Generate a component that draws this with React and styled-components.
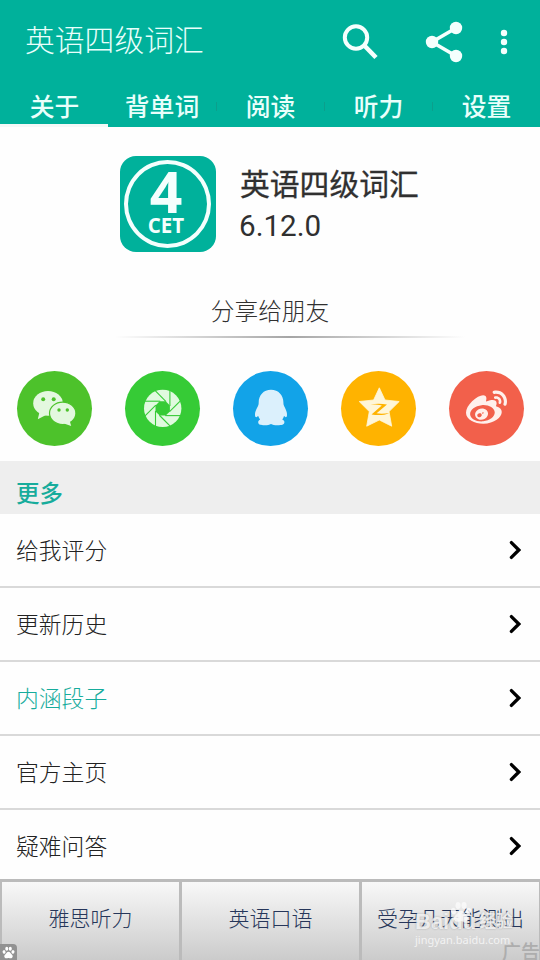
import React from 'react';
import styled, { createGlobalStyle } from 'styled-components';
import { FaWeibo } from 'react-icons/fa';

const TABS = ['关于', '背单词', '阅读', '听力', '设置'];

const ROWS = [
  { label: '给我评分' },
  { label: '更新历史' },
  { label: '内涵段子', active: true },
  { label: '官方主页' },
  { label: '疑难问答' },
];

const ADS = ['雅思听力', '英语口语', '受孕几天能测出'];

function SearchIcon() {
  return (
    <svg width="38" height="38" viewBox="0 0 38 38" fill="none" stroke="#f4fffd">
      <circle cx="14" cy="14.5" r="11.2" strokeWidth="4" />
      <path d="M21.8 22 L34 34.5" strokeWidth="4.6" />
    </svg>
  );
}

function ShareIcon() {
  return (
    <svg width="38" height="42" viewBox="0 0 38 42" fill="#f4fffd">
      <path d="M31 7 L7 21 L31 35" fill="none" stroke="#f4fffd" strokeWidth="3.6" />
      <circle cx="31" cy="7" r="6.2" />
      <circle cx="7" cy="21" r="6.2" />
      <circle cx="31" cy="35" r="6.2" />
    </svg>
  );
}

function MoreIcon() {
  return (
    <svg width="8" height="26" viewBox="0 0 8 26" fill="#f4fffd">
      <circle cx="4" cy="4" r="3.2" />
      <circle cx="4" cy="13" r="3.2" />
      <circle cx="4" cy="22" r="3.2" />
    </svg>
  );
}

function WechatIcon() {
  return (
    <svg width="75" height="75" viewBox="0 0 75 75" fill="#e3f8df">
      <ellipse cx="31" cy="32.3" rx="14.8" ry="12.4" />
      <path d="M22.5 41 L20.8 48.2 L29.5 43.8 Z" />
      <ellipse cx="45.7" cy="42.3" rx="13.2" ry="11.2" stroke="#4dc22b" strokeWidth="1.2" />
      <path d="M47 52.5 L54.2 55 L52.6 49.5 Z" />
      <g fill="#4dc22b">
        <circle cx="26.2" cy="28.3" r="2" />
        <circle cx="36.7" cy="28.3" r="2" />
        <circle cx="42" cy="39" r="1.7" />
        <circle cx="50.3" cy="39" r="1.7" />
      </g>
    </svg>
  );
}

function MomentsIcon() {
  return (
    <svg width="75" height="75" viewBox="-37.7 -37.4 75 75">
      <circle r="18.7" fill="#e0fadf" />
      <path d="M7.2 -3 V3 L3 7.2 H-3 L-7.2 3 V-3 L-3 -7.2 H3 Z" fill="#36cb36" />
      {[0, 45, 90, 135, 180, 225, 270, 315].map((angle) => (
        <path key={angle} d="M7.2 -18.5 V-2.5" stroke="#36cb36" strokeWidth="1.1" transform={`rotate(${angle})`} />
      ))}
    </svg>
  );
}

function QqIcon() {
  return (
    <svg width="75" height="75" viewBox="0 0 75 75" fill="#dbf0fc">
      <path d="M38 18.8 C45.5 18.8 50.4 24.3 50.4 31.5 C50.4 33 50.6 34 51.2 35.3 C53 39 54.2 41.5 54 44 C53.9 46 53 47 51.8 45.6 L51 45 C50.6 46.6 50 47.6 49.2 48.6 C50.8 49.4 51.4 50 51.4 51.2 C51.4 53.6 48.5 54.2 44.6 54.2 C41.5 54.2 39.5 53.8 38 52.9 C36.5 53.8 34.5 54.2 31.6 54.2 C27.7 54.2 25.2 53.6 25.2 51.2 C25.2 50 25.8 49.4 27.2 48.6 C26.4 47.6 25.8 46.6 25.2 45 L24.3 45.6 C23.1 47 22.1 46 22 44 C21.8 41.5 23 39 24.9 35.3 C25.5 34 25.7 33 25.7 31.5 C25.7 24.3 30.5 18.8 38 18.8 Z" />
    </svg>
  );
}

function QzoneIcon() {
  return (
    <svg width="75" height="75" viewBox="0 0 75 75">
      <path
        d="M38.3 16.8 L44 29 L58.2 30.5 L48 40.6 L50.7 55.2 L38.3 49 L25.7 55.2 L28.3 40.6 L18.2 30.5 L32.6 29 Z"
        fill="#fff6d8"
        stroke="#fff6d8"
        strokeWidth="0.8"
        strokeLinejoin="round"
      />
      <path d="M29.5 33.6 C35 32.4 41 32.6 46 33.6 L35.6 42.3 C39.7 42.9 43.7 42.8 48.2 41.9 C43.5 44.3 36.8 44.5 30.5 43.4 L40.8 34.5 C37 33.6 33.5 33.5 29.5 33.6 Z" fill="#ffb300" />
    </svg>
  );
}

function Chevron() {
  return (
    <svg width="12" height="20" viewBox="0 0 12 20" fill="none" stroke="#000" strokeWidth="3.3">
      <path d="M2.4 2.6 L9.8 10 L2.4 17.4" strokeLinecap="round" />
    </svg>
  );
}

function Paw({ size }) {
  return (
    <svg width={size} height={size} viewBox="0 0 24 24" fill="currentColor">
      <ellipse cx="3.8" cy="11" rx="2.7" ry="3.5" transform="rotate(-15 3.8 11)" />
      <ellipse cx="8.8" cy="5" rx="2.8" ry="3.8" />
      <ellipse cx="15.3" cy="5" rx="2.8" ry="3.8" />
      <ellipse cx="20.3" cy="11" rx="2.7" ry="3.5" transform="rotate(15 20.3 11)" />
      <path d="M12 10.5 C15 10.5 16 14 18.5 16 C21 18.5 19.5 22.5 16 22.5 C14 22.5 13.5 22 12 22 C10.5 22 10 22.5 8 22.5 C4.5 22.5 3 18.5 5.5 16 C8 14 9 10.5 12 10.5 Z" />
    </svg>
  );
}

export default function App() {
  return (
    <Screen>
      <GlobalStyle />
      <Header>
        <Toolbar>
          <Title>英语四级词汇</Title>
          <Actions>
            <SearchIcon />
            <ShareIcon />
            <MoreIcon />
          </Actions>
        </Toolbar>
        <Tabs>
          {TABS.map((tab, i) => (
            <Tab key={tab} $active={i === 0}>
              {tab}
            </Tab>
          ))}
        </Tabs>
      </Header>

      <About>
        <Logo>
          <Ring>
            <LogoNumber>4</LogoNumber>
            <LogoText>CET</LogoText>
          </Ring>
        </Logo>
        <div>
          <AppName>英语四级词汇</AppName>
          <Version>6.12.0</Version>
        </div>
      </About>

      <ShareTitle>分享给朋友</ShareTitle>
      <Divider />
      <ShareList>
        <ShareButton $color="#4dc22b"><WechatIcon /></ShareButton>
        <ShareButton $color="#36cb36"><MomentsIcon /></ShareButton>
        <ShareButton $color="#12a3e8"><QqIcon /></ShareButton>
        <ShareButton $color="#ffb300"><QzoneIcon /></ShareButton>
        <ShareButton $color="#f2604b"><FaWeibo size={41} color="#fff0ec" /></ShareButton>
      </ShareList>

      <SectionTitle>更多</SectionTitle>
      <List>
        {ROWS.map((row) => (
          <Row key={row.label} $active={row.active}>
            <RowLabel>{row.label}</RowLabel>
            <Chevron />
          </Row>
        ))}
      </List>

      <AdBar>
        {ADS.map((ad) => (
          <Ad key={ad}>{ad}</Ad>
        ))}
        <PawBadge><Paw size={13} /></PawBadge>
        <AdMark>广告</AdMark>
        <Watermark>
          <WatermarkPaw><Paw size={22} /></WatermarkPaw>
          <WatermarkName>
            <b>Baidu</b>
            <span>经验</span>
          </WatermarkName>
          <WatermarkUrl>jingyan.baidu.com</WatermarkUrl>
        </Watermark>
      </AdBar>
    </Screen>
  );
}

const GlobalStyle = createGlobalStyle`
  * {
    box-sizing: border-box;
  }

  body {
    margin: 0;
    background: #fff;
    font-family: 'Noto Sans CJK SC', sans-serif;
  }

  svg {
    display: block;
    flex: none;
  }
`;

const Screen = styled.div`
  display: flex;
  flex-direction: column;
  width: 540px;
  height: 960px;
  overflow: hidden;
  background: #fefefe;
  color: #303030;
`;

const Header = styled.header`
  height: 127px;
  background: #00b19b;
  color: #e9fffb;
`;

const Toolbar = styled.div`
  display: flex;
  align-items: center;
  justify-content: space-between;
  height: 84px;
  padding: 0 32px 0 25px;
`;

const Title = styled.h1`
  margin: 0 0 8px;
  font-size: 29.8px;
  font-weight: 300;
  line-height: 40px;
`;

const Actions = styled.div`
  display: flex;
  align-items: center;
  gap: 45px;

  svg:last-child {
    margin-left: -8px;
  }
`;

const Tabs = styled.nav`
  display: grid;
  grid-template-columns: repeat(5, 108px);
  height: 43px;
`;

const Tab = styled.div`
  display: flex;
  justify-content: center;
  height: 43px;
  padding-left: 1px;
  border-bottom: 3px solid ${({ $active }) => ($active ? '#f4f8f7' : 'transparent')};
  font-size: 24.8px;
  font-weight: 500;
  line-height: 43px;

  & + & {
    padding-left: 0;
  }

  & + &::before {
    content: '';
    width: 1px;
    height: 9px;
    margin: 18px auto 0 0;
    background: #0b9f8c;
  }

  & + &::after {
    content: '';
    margin-left: auto;
  }
`;

const About = styled.section`
  display: flex;
  gap: 23px;
  height: 125px;
  padding: 29px 0 0 120px;
`;

const Logo = styled.div`
  width: 96px;
  height: 96px;
  padding: 4px;
  border-radius: 16px;
  background: #00b19b;
`;

const Ring = styled.div`
  display: flex;
  flex-direction: column;
  align-items: center;
  width: 87px;
  height: 88px;
  border: 4px solid #f4fffd;
  border-radius: 50%;
  color: #f4fffd;
  font-family: 'Open Sans', sans-serif;
  font-weight: 700;
`;

const LogoNumber = styled.div`
  height: 49px;
  margin-right: 3px;
  font-size: 57px;
  line-height: 54px;
`;

const LogoText = styled.div`
  margin-right: 3px;
  font-size: 20.5px;
  line-height: 24px;
`;

const AppName = styled.div`
  margin-top: 4px;
  padding-left: 1px;
  font-size: 29.8px;
  font-weight: 400;
  line-height: 44px;
  -webkit-text-stroke: 0.3px currentColor;
`;

const Version = styled.div`
  padding-top: 2px;
  font-family: Roboto, sans-serif;
  font-size: 29.6px;
  font-weight: 400;
  line-height: 40px;
`;

const ShareTitle = styled.div`
  height: 84px;
  padding-top: 38px;
  font-size: 23.7px;
  font-weight: 300;
  line-height: 40px;
  text-align: center;
`;

const Divider = styled.div`
  width: 350px;
  height: 2px;
  margin-left: 115px;
  background: linear-gradient(90deg, transparent, #a5a5a5 50%, transparent);
`;

const ShareList = styled.div`
  display: grid;
  grid-template-columns: repeat(5, 108px);
  height: 123px;
  padding: 33px 0 0 17px;
`;

const ShareButton = styled.div`
  display: flex;
  align-items: center;
  justify-content: center;
  width: 75px;
  height: 75px;
  border-radius: 50%;
  background: ${({ $color }) => $color};
`;

const SectionTitle = styled.h2`
  height: 53px;
  margin: 0;
  padding: 0 16px;
  background: #eee;
  color: #17ac9c;
  font-size: 23.5px;
  font-weight: 500;
  line-height: 63px;
`;

const List = styled.div`
  height: 365px;
  overflow: hidden;
`;

const Row = styled.div`
  display: flex;
  align-items: center;
  justify-content: space-between;
  height: 74px;
  padding: 0 19px 0 16px;
  border-bottom: 2px solid #d9d9d9;
  color: ${({ $active }) => ($active ? '#17ac9c' : '#222')};
  font-size: 22.8px;
  font-weight: 300;
`;

const RowLabel = styled.span`
  margin-bottom: 2px;
`;

const AdBar = styled.footer`
  position: relative;
  display: grid;
  grid-template-columns: repeat(3, 177px);
  gap: 3px;
  height: 81px;
  padding: 3px 1px 0 2px;
  background: #bbb;
`;

const Ad = styled.div`
  background: linear-gradient(#f8f8f8, #cbcbcb);
  color: #26365a;
  font-size: 21px;
  font-weight: 300;
  line-height: 71px;
  text-align: center;
  white-space: nowrap;
`;

const PawBadge = styled.div`
  position: absolute;
  left: 0;
  bottom: 0;
  display: flex;
  align-items: center;
  justify-content: center;
  width: 17px;
  height: 16px;
  border-top-right-radius: 4px;
  background: #929292;
  color: #fff;
`;

const AdMark = styled.div`
  position: absolute;
  right: 0;
  bottom: -5px;
  color: #adadad;
  font-size: 19px;
  font-weight: 500;
  line-height: 28px;
`;

const Watermark = styled.div`
  position: absolute;
  top: 22px;
  left: 415px;
  color: rgba(250, 250, 250, 0.82);
  font-family: 'Liberation Sans', 'Noto Sans CJK SC', sans-serif;
`;

const WatermarkPaw = styled.div`
  position: absolute;
  top: 0;
  left: 35px;
`;

const WatermarkName = styled.div`
  display: flex;
  gap: 3px;
  height: 29px;
  padding-top: 7px;
  font-size: 22px;
  line-height: 28px;
  text-shadow: 0 0 2px rgba(130, 130, 130, 0.6);

  span {
    font-size: 17px;
    font-weight: 700;
  }
`;

const WatermarkUrl = styled.div`
  height: 18px;
  font-family: 'Noto Sans', sans-serif;
  font-size: 11px;
  line-height: 19px;
`;
